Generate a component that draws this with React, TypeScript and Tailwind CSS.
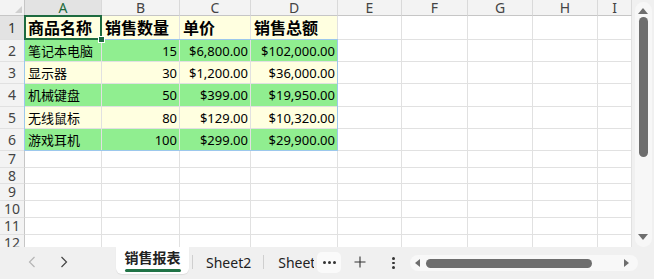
import React from "react";

const cols = ["A", "B", "C", "D", "E", "F", "G", "H", "I"];
const rowHeights = [24, 22, 22, 23, 22, 22, 17, 16, 17, 17, 17, 17];

type Row = { name: string; qty: string; price: string; total: string };
const data: Row[] = [
  { name: "笔记本电脑", qty: "15", price: "$6,800.00", total: "$102,000.00" },
  { name: "显示器", qty: "30", price: "$1,200.00", total: "$36,000.00" },
  { name: "机械键盘", qty: "50", price: "$399.00", total: "$19,950.00" },
  { name: "无线鼠标", qty: "80", price: "$129.00", total: "$10,320.00" },
  { name: "游戏耳机", qty: "100", price: "$299.00", total: "$29,900.00" },
];

const gridTemplate =
  "grid grid-cols-[25px_77px_78px_71px_87px_64px_66px_65px_65px_34px] grid-rows-[16px_24px_22px_22px_23px_22px_22px_17px_16px_17px_17px_17px_17px]";

const cellBase =
  "border-r border-b border-[#e1e1e1] overflow-hidden whitespace-nowrap flex items-center";

function Grid() {
  const cells: React.ReactNode[] = [];
  cells.push(
    <div key="corner" className="bg-[#f3f3f3] border-r border-b border-[#c6c6c6] relative">
      <div className="absolute right-[2px] bottom-[2px] w-0 h-0 border-l-[7px] border-l-transparent border-b-[7px] border-b-[#d0d0d0]" />
    </div>
  );
  cols.forEach((c, i) => {
    cells.push(
      <div
        key={"h" + c}
        className={
          "border-r border-b flex items-center justify-center text-[14px] border-r-[#d9d9d9] border-b-[#c6c6c6] " +
          (i === 0 ? "bg-[#e3e3e3] text-[#1d6b3c]" : "bg-[#f3f3f3] text-[#444]")
        }
      >
        <span className="leading-[14px]">{c}</span>
      </div>
    );
  });

  rowHeights.forEach((_, r) => {
    const rn = r + 1;
    cells.push(
      <div
        key={"r" + rn}
        className={
          "border-r border-b border-r-[#c6c6c6] border-b-[#e1e1e1] flex items-center justify-center text-[14px] leading-[14px] overflow-hidden " +
          (rn === 1 ? "bg-[#e3e3e3] text-[#333]" : "bg-[#f3f3f3] text-[#444]")
        }
      >
        {rn}
      </div>
    );
    for (let ci = 0; ci < cols.length; ci++) {
      const key = cols[ci] + rn;
      let content: React.ReactNode = null;
      let bg = "bg-white";
      let align = "justify-start";
      let extra = "";
      if (rn === 1 && ci < 4) {
        bg = "bg-[#ffffe0]";
        content = ["商品名称", "销售数量", "单价", "销售总额"][ci];
        extra = "font-bold text-[16px] pl-[3px]";
      } else if (rn >= 2 && rn <= 6 && ci < 4) {
        const d = data[rn - 2];
        bg = rn % 2 === 0 ? "bg-[#90ee90]" : "bg-[#ffffe0]";
        if (ci === 0) {
          content = d.name;
          extra = "text-[13px] pl-[3px]";
        } else {
          content = ci === 1 ? d.qty : ci === 2 ? d.price : d.total;
          align = "justify-end";
          extra = "text-[13px] pr-[2px]";
        }
      }
      cells.push(
        <div key={key} className={`${cellBase} ${bg} ${align} ${extra} text-black`}>
          <span className="leading-[16px]">{content}</span>
        </div>
      );
    }
  });

  return (
    <div className="relative w-[632px] h-[247px] overflow-hidden font-['Noto_Sans','Noto_Sans_CJK_SC',sans-serif]">
      <div className={gridTemplate}>{cells}</div>
      <div className={`absolute inset-0 pointer-events-none ${gridTemplate}`}>
        <div className="col-start-2 col-end-6 row-start-3 row-end-8 border border-[#9cc8ec] -ml-px -mt-px" />
        <div className="col-start-2 col-end-3 row-start-2 row-end-3 relative -ml-px -mt-px">
          <div className="absolute inset-0 border-2 border-[#1e6b40]" />
          <div className="absolute right-[-3px] bottom-[-3px] w-[5px] h-[5px] bg-[#1e6b40] border border-white box-content" />
        </div>
      </div>
    </div>
  );
}

function VScroll() {
  return (
    <div className="w-[22px] h-[247px] bg-[#f0f0f0] flex justify-center pt-[2px]">
      <div className="w-[17px] bg-[#f7f7f7] rounded-full flex flex-col items-center py-[4px]">
        <div className="w-0 h-0 border-l-[5px] border-l-transparent border-r-[5px] border-r-transparent border-b-[6px] border-b-[#6e6e6e] mt-[2px]" />
        <div className="w-[9px] h-[140px] bg-[#6e6e6e] rounded-full mt-[3px]" />
        <div className="flex-1" />
        <div className="w-0 h-0 border-l-[5px] border-l-transparent border-r-[5px] border-r-transparent border-t-[6px] border-t-[#6e6e6e] mb-[3px]" />
      </div>
    </div>
  );
}

function TabBar() {
  return (
    <div className="h-[32px] bg-[#f0f0f0] flex items-start font-['Noto_Sans','Noto_Sans_CJK_SC',sans-serif] text-[14px]">
      <div className="w-[116px] h-[30px] flex items-center shrink-0">
        <svg width="8" height="12" viewBox="0 0 8 12" className="ml-[28px]">
          <path d="M6.5 1 L1.5 6 L6.5 11" fill="none" stroke="#b5b5b5" strokeWidth="1.2" />
        </svg>
        <svg width="8" height="12" viewBox="0 0 8 12" className="ml-[24px]">
          <path d="M1.5 1 L6.5 6 L1.5 11" fill="none" stroke="#444" strokeWidth="1.2" />
        </svg>
      </div>
      <div className="w-[73px] h-[27px] shrink-0 bg-white rounded-b-[6px] shadow-[0_1px_1px_rgba(0,0,0,0.08)] flex flex-col items-center justify-center">
        <span className="font-bold text-[14px] leading-[16px] text-[#222] mt-[1px]">销售报表</span>
        <div className="w-[56px] h-[3px] bg-[#217346] rounded-full mt-[3px]" />
      </div>
      <div className="w-px h-[14px] shrink-0 bg-[#cfcfcf] mt-[8px] ml-[3px]" />
      <div className="h-[30px] shrink-0 flex items-center pl-[13px] pr-[12px] text-[#222]">Sheet2</div>
      <div className="w-px h-[14px] shrink-0 bg-[#cfcfcf] mt-[8px]" />
      <div className="h-[30px] w-[50px] shrink-0 flex items-center pl-[14px] text-[#222] overflow-hidden whitespace-nowrap">Sheet3</div>
      <div className="w-[24px] h-[21px] shrink-0 mt-[5px] ml-[3px] bg-[#fafafa] rounded-[5px] flex items-center justify-center gap-[2px]">
        <span className="w-[3px] h-[3px] rounded-full bg-[#333]" />
        <span className="w-[3px] h-[3px] rounded-full bg-[#333]" />
        <span className="w-[3px] h-[3px] rounded-full bg-[#333]" />
      </div>
      <div className="h-[30px] shrink-0 flex items-center ml-[13px]">
        <svg width="12" height="12" viewBox="0 0 12 12">
          <path d="M6 0.5 V11.5 M0.5 6 H11.5" stroke="#333" strokeWidth="1.1" />
        </svg>
      </div>
      <div className="h-[30px] shrink-0 flex flex-col items-center justify-center gap-[2px] ml-[26px] mt-[1px]">
        <span className="w-[2.5px] h-[2.5px] rounded-full bg-[#333]" />
        <span className="w-[2.5px] h-[2.5px] rounded-full bg-[#333]" />
        <span className="w-[2.5px] h-[2.5px] rounded-full bg-[#333]" />
      </div>
      <div className="ml-[15px] mt-[8px] w-[228px] shrink-0 h-[16px] bg-[#f8f8f8] rounded-full flex items-center pl-[5px] pr-[9px]">
        <div className="w-0 h-0 border-t-[4px] border-t-transparent border-b-[4px] border-b-transparent border-r-[5px] border-r-[#6e6e6e]" />
        <div className="w-[166px] h-[9px] bg-[#6e6e6e] rounded-full ml-[6px]" />
        <div className="flex-1" />
        <div className="w-0 h-0 border-t-[4px] border-t-transparent border-b-[4px] border-b-transparent border-l-[5px] border-l-[#6e6e6e]" />
      </div>
    </div>
  );
}

export default function App() {
  return (
    <div className="w-[654px] h-[279px] bg-white overflow-hidden flex flex-col">
      <div className="flex shrink-0">
        <Grid />
        <VScroll />
      </div>
      <TabBar />
    </div>
  );
}
